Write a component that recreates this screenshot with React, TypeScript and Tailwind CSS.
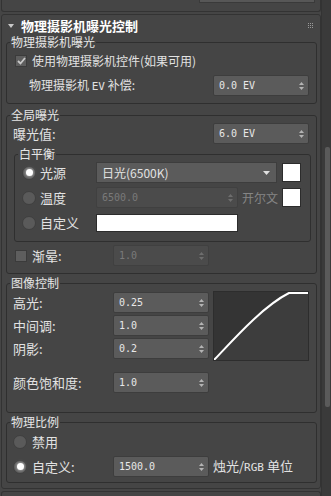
import React from "react";

const CJK = "font-['Noto_Sans_CJK_SC','Noto_Sans',sans-serif]";
const MONO = "font-['DejaVu_Sans_Mono',monospace] text-[10px]";

function Arrows({ disabled }: { disabled?: boolean }) {
  const c = disabled ? "#6e6e6e" : "#b4b4b4";
  return (
    <svg width="5" height="8" viewBox="0 0 5 8" className="shrink-0">
      <polygon points="0,3 2.5,0 5,3" fill={c} />
      <polygon points="0,5 2.5,8 5,5" fill={c} />
    </svg>
  );
}

function Spinner({ value, w, disabled }: { value: string; w: string; disabled?: boolean }) {
  return (
    <div
      className={`${w} h-[21px] shrink-0 flex items-center justify-between pl-[5px] pr-[4px] border rounded-[2px] ${
        disabled ? "bg-[#4b4b4b] border-[#404040] text-[#7a7a7a]" : "bg-[#5b5b5b] border-[#3d3d3d] text-[#e8e8e8]"
      }`}
    >
      <span className={MONO}>{value}</span>
      <Arrows disabled={disabled} />
    </div>
  );
}

function Check({ checked }: { checked?: boolean }) {
  return (
    <div className="w-[12px] h-[12px] shrink-0 bg-[#5e5e5e] border border-[#3b3b3b] flex items-center justify-center">
      {checked && (
        <svg width="9" height="8" viewBox="0 0 9 8">
          <path d="M1 4 L3.5 6.5 L8 1" stroke="#c8c8c8" strokeWidth="1.8" fill="none" />
        </svg>
      )}
    </div>
  );
}

function Radio({ on }: { on?: boolean }) {
  return (
    <div className="w-[14px] h-[14px] shrink-0 rounded-full bg-[#5a5a5a] border border-[#3f3f3f] flex items-center justify-center">
      {on && <div className="w-[7px] h-[7px] rounded-full bg-white shadow-[0_0_3px_1px_rgba(255,255,255,0.45)]" />}
    </div>
  );
}

function Swatch() {
  return <div className="w-[19px] h-[19px] shrink-0 bg-white border border-[#2c2c2c]" />;
}

function Group({ title, className, children }: { title: string; className: string; children: React.ReactNode }) {
  return (
    <fieldset className={`border border-[#2f2f2f] rounded-[3px] px-[3px] ${className}`}>
      <legend className="px-[1px] text-[12px] leading-[12px] text-[#e6e6e6]">{title}</legend>
      {children}
    </fieldset>
  );
}

export default function App() {
  return (
    <div className={`w-[331px] h-[496px] bg-[#454545] flex overflow-hidden text-[12px] leading-[12px] text-[#e2e2e2] ${CJK}`}>
      <div className="w-[321px] shrink-0 flex flex-col">
        {/* tail of previous rollout */}
        <div className="h-[12px] shrink-0 ml-[1px] w-[320px] border-b border-l border-r border-[#333] rounded-b-[3px]">
          <div className="ml-[197px] w-[116px] h-[3px] bg-[#575757] border-b border-l border-r border-[#3a3a3a]" />
        </div>
        {/* rollout */}
        <div className="mt-[2px] ml-[1px] w-[320px] border border-[#333] rounded-[3px] flex flex-col pb-[5px]">
          <div className="h-[21px] flex items-center pl-[6px] pr-[7px]">
            <svg width="6" height="4" viewBox="0 0 6 4" className="shrink-0">
              <polygon points="0,0 6,0 3,4" fill="#c8c8c8" />
            </svg>
            <span className="ml-[7px] font-bold text-[13px] text-white">物理摄影机曝光控制</span>
            <svg width="5" height="5" viewBox="0 0 5 5" className="ml-auto">
              {[0, 2, 4].map((x) =>
                [0, 2, 4].map((y) => <rect key={`${x}-${y}`} x={x} y={y} width="1" height="1" fill="#9a9a9a" />)
              )}
            </svg>
          </div>

          {/* 物理摄影机曝光 */}
          <Group title="物理摄影机曝光" className="ml-[4px] mr-[3px] pb-[7px]">
            <div className="pt-[3px] h-[23px] flex items-center pl-[5px]">
              <Check checked />
              <span className="ml-[5px]">使用物理摄影机控件(如果可用)</span>
            </div>
            <div className="mt-[4px] flex items-center">
              <span className="ml-[19px] w-[184px]">
                物理摄影机 <span className={MONO + " text-[11px]"}>EV</span> 补偿:
              </span>
              <Spinner value="0.0 EV" w="w-[96px]" />
            </div>
          </Group>

          {/* 全局曝光 */}
          <Group title="全局曝光" className="mt-[5px] ml-[4px] mr-[3px] pb-[7px]">
            <div className="pt-[2px] flex items-center">
              <span className="ml-[3px] w-[200px] text-[13px]">曝光值:</span>
              <Spinner value="6.0 EV" w="w-[96px]" />
            </div>
            <Group title="白平衡" className="mt-[4px] ml-[4px] mr-[2px] pb-[8px]">
              <div className="pt-[2px] flex items-center h-[23px]">
                <div className="ml-[4px]"><Radio on /></div>
                <span className="ml-[4px] w-[56px] text-[13px]">光源</span>
                <div className="w-[181px] h-[21px] bg-[#5b5b5b] border border-[#3d3d3d] flex items-center justify-between pl-[5px] pr-[6px]">
                  <span className="text-[12px]">日光(6500K)</span>
                  <svg width="7" height="4" viewBox="0 0 7 4">
                    <polygon points="0,0 7,0 3.5,4" fill="#e0e0e0" />
                  </svg>
                </div>
                <div className="ml-[5px]"><Swatch /></div>
              </div>
              <div className="mt-[4px] flex items-center h-[21px]">
                <div className="ml-[4px]"><Radio /></div>
                <span className="ml-[4px] w-[56px] text-[13px]">温度</span>
                <Spinner value="6500.0" w="w-[142px]" disabled />
                <span className="ml-[4px] w-[40px] text-[#858585] text-[12px]">开尔文</span>
                <Swatch />
              </div>
              <div className="mt-[4px] flex items-center h-[21px]">
                <div className="ml-[4px]"><Radio /></div>
                <span className="ml-[4px] w-[56px] text-[13px]">自定义</span>
                <div className="w-[142px] h-[18px] bg-white border border-[#2c2c2c]" />
              </div>
            </Group>
            <div className="mt-[3px] flex items-center">
              <div className="ml-[5px]"><Check /></div>
              <span className="ml-[5px] w-[81px] text-[13px]">渐晕:</span>
              <Spinner value="1.0" w="w-[96px]" disabled />
            </div>
          </Group>

          {/* 图像控制 */}
          <Group title="图像控制" className="mt-[3px] ml-[4px] mr-[3px] pb-[19px]">
            <div className="pt-[2px] flex items-start">
              <div className="flex flex-col gap-[2px] pt-[1px]">
                {[
                  ["高光:", "0.25"],
                  ["中间调:", "1.0"],
                  ["阴影:", "0.2"],
                ].map(([l, v]) => (
                  <div key={l} className="flex items-center">
                    <span className="ml-[3px] w-[100px] text-[13px]">{l}</span>
                    <Spinner value={v} w="w-[96px]" />
                  </div>
                ))}
              </div>
              <div className="ml-[4px] w-[96px] h-[70px] bg-[#343434] border border-[#2d2d2d]">
                <svg width="94" height="68" viewBox="0 0 94 68">
                  <path d="M0 68 C 19 48, 49 14, 75 1 L 94 1 L 94 68 Z" fill="#3d3d3d" />
                  <path d="M0 68 C 19 48, 49 14, 75 1 L 94 1" stroke="#ffffff" strokeWidth="2" fill="none" />
                </svg>
              </div>
            </div>
            <div className="mt-[11px] flex items-center">
              <span className="ml-[3px] w-[100px] text-[13px]">颜色饱和度:</span>
              <Spinner value="1.0" w="w-[96px]" />
            </div>
          </Group>

          {/* 物理比例 */}
          <Group title="物理比例" className="mt-[3px] ml-[4px] mr-[3px] pb-[5px]">
            <div className="pt-[4px] h-[24px] flex items-center">
              <div className="ml-[3px]"><Radio /></div>
              <span className="ml-[5px] text-[13px]">禁用</span>
            </div>
            <div className="mt-[4px] flex items-center">
              <div className="ml-[3px]"><Radio on /></div>
              <span className="ml-[5px] w-[81px] text-[13px]">自定义:</span>
              <Spinner value="1500.0" w="w-[96px]" />
              <span className="ml-[4px] text-[13px]">
                烛光/<span className={MONO + " text-[11px]"}>RGB</span> 单位
              </span>
            </div>
          </Group>
        </div>
        <div className="mt-[2px] ml-[1px] w-[320px] flex-1 border-t border-l border-r border-[#333] rounded-t-[3px]" />
      </div>
      {/* scrollbar */}
      <div className="w-[10px] shrink-0 bg-[#3a3a3a] border-l border-[#333] flex flex-col">
        <div className="mt-[147px] ml-[3px] w-[5px] h-[260px] bg-[#5a5a5a] rounded-[2px]" />
      </div>
    </div>
  );
}
